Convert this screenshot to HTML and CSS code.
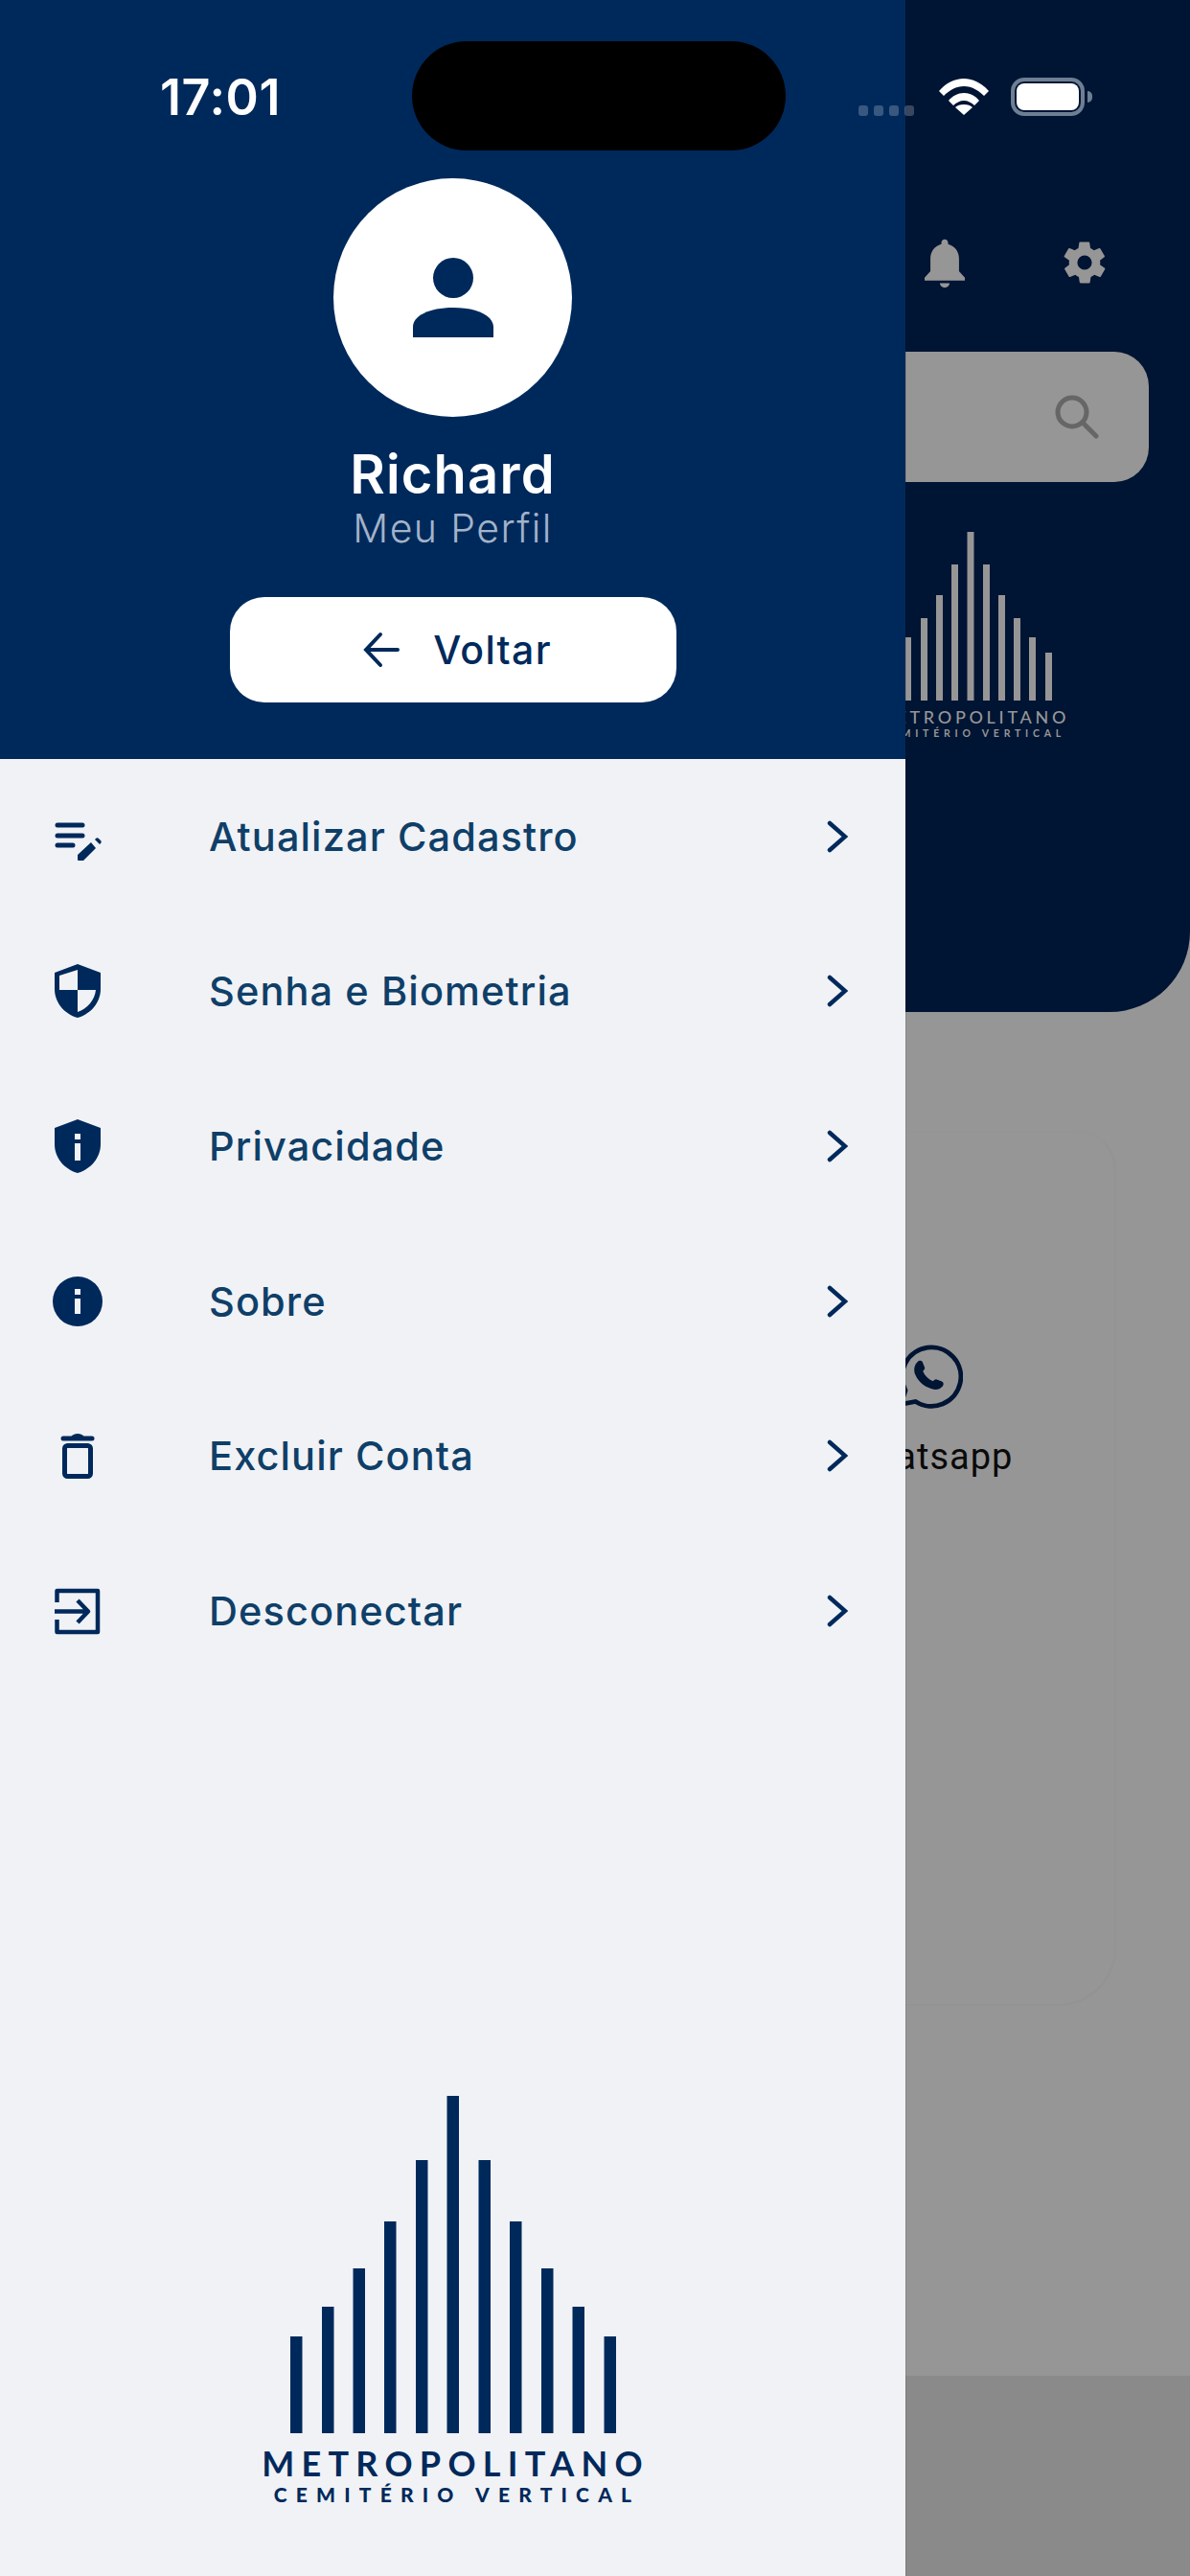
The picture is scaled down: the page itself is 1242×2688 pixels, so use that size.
FILE: index.html
```html
<!DOCTYPE html>
<html lang="pt-br">
<head>
    <meta charset="UTF-8">
    <meta name="viewport" content="width=device-width, initial-scale=1.0">
    <title>Meu Perfil</title>
    <link rel="stylesheet" href="styles.css">
</head>
<body>
    <div class="screen">
        <!-- Tela por baixo do menu, ja escurecida -->
        <div class="page">
            <div class="page-header">
                <div class="page-actions">
                    <svg class="action-icon bell" viewBox="0 0 24 24"><path d="M12 1.600c-.9 0-1.500.7-1.500 1.500v.6C7.400 4.500 5.600 7.100 5.600 10.200v5.700L3 18.700v1.300h18v-1.300l-2.600-2.800v-5.700c0-3.100-1.800-5.700-4.900-6.500v-.6c0-.8-.6-1.500-1.500-1.500z M9.800 21.200c.2 1.200 1.100 2 2.200 2s2-.8 2.200-2z"/></svg>
                    <svg class="action-icon gear" viewBox="0 0 24 24"><path d="M19.400 13c.1-.3.1-.7.1-1s0-.7-.1-1l2.100-1.600c.2-.2.2-.4.1-.6l-2-3.500c-.1-.2-.4-.3-.6-.2l-2.500 1c-.5-.4-1.100-.7-1.700-1l-.4-2.600c0-.3-.2-.4-.5-.4h-4c-.3 0-.5.100-.5.400l-.4 2.600c-.6.300-1.200.6-1.700 1l-2.500-1c-.2-.1-.5 0-.6.200l-2 3.500c-.1.200-.1.400.1.600L4.600 11c0 .3-.1.700-.1 1s0 .7.100 1l-2.100 1.600c-.2.2-.2.4-.1.600l2 3.500c.1.200.4.300.6.200l2.500-1c.5.400 1.100.7 1.700 1l.4 2.600c0 .3.200.4.500.4h4c.3 0 .5-.1.500-.4l.4-2.600c.6-.3 1.200-.6 1.700-1l2.500 1c.2.100.5 0 .6-.2l2-3.500c.1-.2.1-.4-.1-.6zM12 15.500a3.500 3.500 0 1 1 0-7 3.500 3.500 0 0 1 0 7z"/></svg>
                </div>
                <div class="search">
                    <svg class="search-icon" viewBox="0 0 46 46"><circle cx="18" cy="18" r="15"/><path d="M29 29l14 14"/></svg>
                </div>
                <div class="page-logo">
                    <svg class="page-logo-bars" viewBox="0 0 170 176"><rect x="0" y="126" width="7" height="50"/><rect x="16" y="110" width="7" height="66"/><rect x="33" y="90" width="7" height="86"/><rect x="49" y="66" width="7" height="110"/><rect x="65" y="34" width="7" height="142"/><rect x="81.500" y="0" width="7" height="176"/><rect x="98" y="34" width="7" height="142"/><rect x="114" y="66" width="7" height="110"/><rect x="130" y="90" width="7" height="86"/><rect x="146" y="110" width="7" height="66"/><rect x="163" y="126" width="7" height="50"/></svg>
                    <p class="page-logo-name">METROPOLITANO</p>
                    <p class="page-logo-sub">CEMITÉRIO VERTICAL</p>
                </div>
            </div>
            <div class="page-body">
                <div class="page-card">
                    <div class="contact">
                        <svg class="contact-icon" viewBox="0 0 74 74"><path class="contact-ring" d="M8 66l5-15A32 32 0 1 1 24 63z"/><path class="contact-phone" d="M26 20c2-2 5-2 6 1l2 5c.5 1.500-1 3-2 4 2 5 6 9 11 11 1-1 2.500-2.500 4-2l5 2c3 1 3 4 1 6-3 3-7 4-12 2-9-3-15-9-18-17-1-5 0-9 3-12z"/></svg>
                        <span class="contact-label">Whatsapp</span>
                    </div>
                </div>
            </div>
            <div class="page-tabs"></div>
        </div>

        <!-- Menu lateral -->
        <aside class="drawer">
            <header class="drawer-head">
                <div class="avatar">
                    <svg class="avatar-icon" viewBox="0 0 84 84"><circle cx="42" cy="21" r="21"/><path d="M0 83V72c0-11 16-20 42-20s42 9 42 20v11z"/></svg>
                </div>
                <h1 class="user-name">Richard</h1>
                <p class="user-link">Meu Perfil</p>
                <button class="back-button">
                    <svg class="back-icon" viewBox="0 0 38 38"><path d="M36 19H3M18 3L3 19l15 16"/></svg>
                    Voltar
                </button>
            </header>

            <nav class="menu">
                <a class="menu-row">
                    <span class="menu-icon"><svg viewBox="0 0 54 54"><g class="line-icon"><path d="M6 15h26M6 26h26M6 36h16"/></g><path class="fill-icon" d="M41 33l5 6-13 13h-5q-1 0-1-1v-5zM45 30l1-1c1-1 2-1 3 0l2 2c1 1 1 2 0 3l-1 1z"/></svg></span>
                    <span class="menu-label">Atualizar Cadastro</span>
                    <svg class="menu-arrow" viewBox="0 0 24 36"><path d="M5 4l16 14L5 32"/></svg>
                </a>
                <a class="menu-row">
                    <span class="menu-icon"><svg viewBox="0 0 54 58"><path class="fill-icon" fill-rule="evenodd" d="M27 1L3 10v17c0 14 10 26 24 30 14-4 24-16 24-30V10zM27 7v21H8V13zM27 28h19c-1 10-9 20-19 23z"/></svg></span>
                    <span class="menu-label">Senha e Biometria</span>
                    <svg class="menu-arrow" viewBox="0 0 24 36"><path d="M5 4l16 14L5 32"/></svg>
                </a>
                <a class="menu-row">
                    <span class="menu-icon"><svg viewBox="0 0 54 58"><path class="fill-icon" fill-rule="evenodd" d="M27 1L3 10v17c0 14 10 26 24 30 14-4 24-16 24-30V10zM24 16v6h6v-6zM24 26v18h6V26z"/></svg></span>
                    <span class="menu-label">Privacidade</span>
                    <svg class="menu-arrow" viewBox="0 0 24 36"><path d="M5 4l16 14L5 32"/></svg>
                </a>
                <a class="menu-row">
                    <span class="menu-icon"><svg viewBox="0 0 54 54"><path class="fill-icon" fill-rule="evenodd" d="M27 1a26 26 0 1 0 0 52 26 26 0 0 0 0-52zM24 14v6h6v-6zM24 24v16h6V24z"/></svg></span>
                    <span class="menu-label">Sobre</span>
                    <svg class="menu-arrow" viewBox="0 0 24 36"><path d="M5 4l16 14L5 32"/></svg>
                </a>
                <a class="menu-row">
                    <span class="menu-icon"><svg viewBox="0 0 54 54"><g class="line-icon"><path d="M12 9h30"/><rect x="13.500" y="16.500" width="27" height="32" rx="3"/></g><path class="fill-icon" d="M20 8c1-3 4-4 7-4s6 1 7 4z"/></svg></span>
                    <span class="menu-label">Excluir Conta</span>
                    <svg class="menu-arrow" viewBox="0 0 24 36"><path d="M5 4l16 14L5 32"/></svg>
                </a>
                <a class="menu-row">
                    <span class="menu-icon"><svg viewBox="0 0 54 54"><g class="line-icon thin"><path d="M5.500 18V6h42.500v43H5.500V36"/><path d="M3 27.500h34M27 16l11 11.500L27 39"/></g></svg></span>
                    <span class="menu-label">Desconectar</span>
                    <svg class="menu-arrow" viewBox="0 0 24 36"><path d="M5 4l16 14L5 32"/></svg>
                </a>
            </nav>

            <div class="drawer-logo">
                <svg class="drawer-logo-bars" viewBox="0 0 340 352"><rect x="0" y="251" width="12.500" height="101"/><rect x="33" y="220" width="12.500" height="132"/><rect x="65.500" y="180" width="12.500" height="172"/><rect x="98" y="131" width="12.500" height="221"/><rect x="131" y="67" width="12.500" height="285"/><rect x="163.500" y="0" width="12.500" height="352"/><rect x="196.500" y="67" width="12.500" height="285"/><rect x="229" y="131" width="12.500" height="221"/><rect x="262" y="180" width="12.500" height="172"/><rect x="294.500" y="220" width="12.500" height="132"/><rect x="327.500" y="251" width="12.500" height="101"/></svg>
                <p class="drawer-logo-name">METROPOLITANO</p>
                <p class="drawer-logo-sub">CEMITÉRIO VERTICAL</p>
            </div>
        </aside>

        <!-- Barra de status do aparelho, por cima de tudo -->
        <div class="status">
            <span class="status-time">17:01</span>
            <div class="island"></div>
            <div class="status-dots"><i></i><i></i><i></i><i></i></div>
            <svg class="status-wifi" viewBox="0 0 52 38"><path d="M0 13C7 5 16 0 26 0s19 5 26 13l-5 5C41 12 34 8 26 8S11 12 5 18z"/><path d="M10 23c4-5 10-8 16-8s12 3 16 8l-5 5c-3-3-7-5-11-5s-8 2-11 5z"/><path d="M17 30c2-2 5-3 9-3s7 1 9 3l-9 8z"/></svg>
            <div class="status-battery"><div class="battery-level"></div></div>
        </div>
    </div>
</body>
</html>
```
FILE: styles.css
```css
* {
    box-sizing: border-box;
}
html, body {
    margin: 0;
    padding: 0;
}
body {
    font-family: 'Inter', 'Liberation Sans', sans-serif;
    background-color: #969696;
}
p, h1 {
    margin: 0;
}
.screen {
    position: relative;
    width: 1242px;
    height: 2688px;
    overflow: hidden;
}

/* tela de fundo */
.page {
    display: flex;
    flex-direction: column;
    height: 100%;
    background-color: #969696;
}
.page-header {
    display: flex;
    flex-direction: column;
    align-items: flex-end;
    height: 1056px;
    padding: 246px 43px 0 0;
    background-color: #001433;
    border-bottom-right-radius: 84px;
}
.page-actions {
    display: flex;
    align-items: center;
    gap: 92px;
    height: 56px;
    padding-right: 41px;
}
.action-icon {
    fill: #969696;
}
.action-icon.bell {
    width: 56px;
    height: 56px;
}
.action-icon.gear {
    width: 52px;
    height: 52px;
}
.search {
    display: flex;
    align-items: center;
    justify-content: flex-end;
    width: 700px;
    height: 136px;
    margin-top: 65px;
    padding-right: 52px;
    background-color: #969696;
    border-radius: 36px;
}
.search-icon {
    width: 46px;
    height: 46px;
    fill: none;
    stroke: #666666;
    stroke-width: 5;
    stroke-linecap: round;
}
.page-logo {
    display: flex;
    flex-direction: column;
    align-items: center;
    width: 360px;
    margin: 52px 6px 0 0;
    color: #969696;
    font-family: 'Lato', sans-serif;
    white-space: nowrap;
}
.page-logo-bars {
    width: 170px;
    height: 176px;
    fill: #969696;
}
.page-logo-name {
    margin-top: 6px;
    padding-left: 5px;
    font-size: 18px;
    line-height: 22px;
    font-weight: 500;
    letter-spacing: 3.700px;
}
.page-logo-sub {
    padding-left: 4px;
    font-size: 10.500px;
    line-height: 12px;
    font-weight: 700;
    letter-spacing: 4.800px;
}
.page-body {
    flex: 1;
    padding: 124px 0 0 0;
}
.page-card {
    display: flex;
    justify-content: flex-end;
    width: 1165px;
    height: 913px;
    padding: 220px 95px 0 0;
    border: 2px solid #939393;
    border-left: 0;
    border-top-color: #959595;
    border-radius: 0 40px 60px 0;
}
.contact {
    display: flex;
    flex-direction: column;
    align-items: center;
    gap: 25px;
    width: 200px;
    height: 140px;
}
.contact-icon {
    width: 74px;
    height: 74px;
}
.contact-ring {
    fill: none;
    stroke: #001433;
    stroke-width: 5;
}
.contact-phone {
    fill: #001433;
}
.contact-label {
    font-family: 'Roboto', sans-serif;
    font-size: 38px;
    letter-spacing: 1px;
    color: #0a0a0a;
}
.page-tabs {
    height: 209px;
    background-color: #8a8a8a;
}

/* menu lateral */
.drawer {
    position: absolute;
    top: 0;
    left: 0;
    display: flex;
    flex-direction: column;
    width: 945px;
    height: 100%;
    background-color: #f0f2f6;
    box-shadow: 1px 0 0 rgba(0, 0, 0, 0.1);
}
.drawer-head {
    display: flex;
    flex-direction: column;
    align-items: center;
    height: 792px;
    padding-top: 186px;
    background-color: #00295b;
}
.avatar {
    display: flex;
    align-items: flex-start;
    justify-content: center;
    width: 249px;
    height: 249px;
    padding-top: 83px;
    background-color: #ffffff;
    border-radius: 50%;
}
.avatar-icon {
    width: 84px;
    height: 84px;
    fill: #00295b;
}
.user-name {
    margin-top: 29px;
    font-size: 56px;
    line-height: 62px;
    font-weight: 600;
    letter-spacing: 1.200px;
    color: #ffffff;
}
.user-link {
    font-size: 41px;
    line-height: 50px;
    font-weight: 300;
    letter-spacing: 1.400px;
    color: #a3b3c9;
}
.back-button {
    display: flex;
    align-items: center;
    justify-content: center;
    gap: 35px;
    width: 466px;
    height: 110px;
    margin-top: 47px;
    padding: 0 0 0 10px;
    background-color: #ffffff;
    border: none;
    border-radius: 36px;
    font-family: inherit;
    font-size: 41px;
    font-weight: 450;
    letter-spacing: 1.300px;
    color: #00295b;
}
.back-icon {
    width: 38px;
    height: 38px;
    fill: none;
    stroke: #00295b;
    stroke-width: 4;
    stroke-linecap: round;
}
.menu {
    display: flex;
    flex-direction: column;
}
.menu-row {
    display: flex;
    align-items: center;
    height: 161.6px;
    padding: 0 60px 0 54px;
}
.menu-icon {
    display: flex;
    flex-shrink: 0;
    width: 54px;
    margin-right: 110px;
}
.menu-icon svg {
    display: block;
    width: 54px;
}
.fill-icon {
    fill: #00295b;
}
.line-icon {
    fill: none;
    stroke: #00295b;
    stroke-width: 5;
    stroke-linecap: round;
}
.line-icon.thin {
    stroke-width: 4.500;
    stroke-linecap: butt;
    stroke-linejoin: round;
}
.menu-label {
    flex: 1;
    font-size: 41.500px;
    font-weight: 450;
    letter-spacing: 1.100px;
    color: #0f3f68;
}
.menu-arrow {
    width: 24px;
    height: 36px;
    fill: none;
    stroke: #00295b;
    stroke-width: 4.500;
    stroke-linecap: round;
}
.drawer-logo {
    display: flex;
    flex-direction: column;
    align-items: center;
    margin-top: auto;
    padding-bottom: 73px;
    color: #00295b;
    font-family: 'Lato', sans-serif;
    white-space: nowrap;
}
.drawer-logo-bars {
    width: 340px;
    height: 352px;
    fill: #00295b;
}
.drawer-logo-name {
    margin-top: 10px;
    padding-left: 6px;
    font-size: 36px;
    line-height: 42px;
    font-weight: 700;
    letter-spacing: 7.300px;
}
.drawer-logo-sub {
    padding-left: 9px;
    font-size: 21px;
    line-height: 24px;
    font-weight: 900;
    letter-spacing: 9.200px;
}

/* barra de status */
.status {
    position: absolute;
    top: 0;
    left: 0;
    width: 100%;
    height: 160px;
}
.status-time {
    position: absolute;
    left: 167px;
    top: 72px;
    font-size: 52px;
    line-height: 60px;
    font-weight: 600;
    letter-spacing: 0.6px;
    color: #ffffff;
}
.island {
    position: absolute;
    left: 430px;
    top: 43px;
    width: 390px;
    height: 114px;
    background-color: #000000;
    border-radius: 57px;
}
.status-dots {
    position: absolute;
    left: 896px;
    top: 110px;
    display: flex;
    gap: 6px;
}
.status-dots i {
    display: block;
    width: 10px;
    height: 11px;
    background-color: rgba(255, 255, 255, 0.22);
    border-radius: 3px;
}
.status-wifi {
    position: absolute;
    left: 980px;
    top: 82px;
    width: 52px;
    height: 38px;
    fill: #ffffff;
}
.status-battery {
    position: absolute;
    left: 1055px;
    top: 81px;
    width: 77px;
    height: 40px;
    padding: 2px;
    border: 4px solid #6c7f93;
    border-radius: 14px;
}
.status-battery::after {
    content: "";
    position: absolute;
    left: 76px;
    top: 10px;
    width: 5px;
    height: 12px;
    background-color: #6c7f93;
    border-radius: 0 5px 5px 0;
}
.battery-level {
    height: 100%;
    background-color: #ffffff;
    border-radius: 8px;
}
```
